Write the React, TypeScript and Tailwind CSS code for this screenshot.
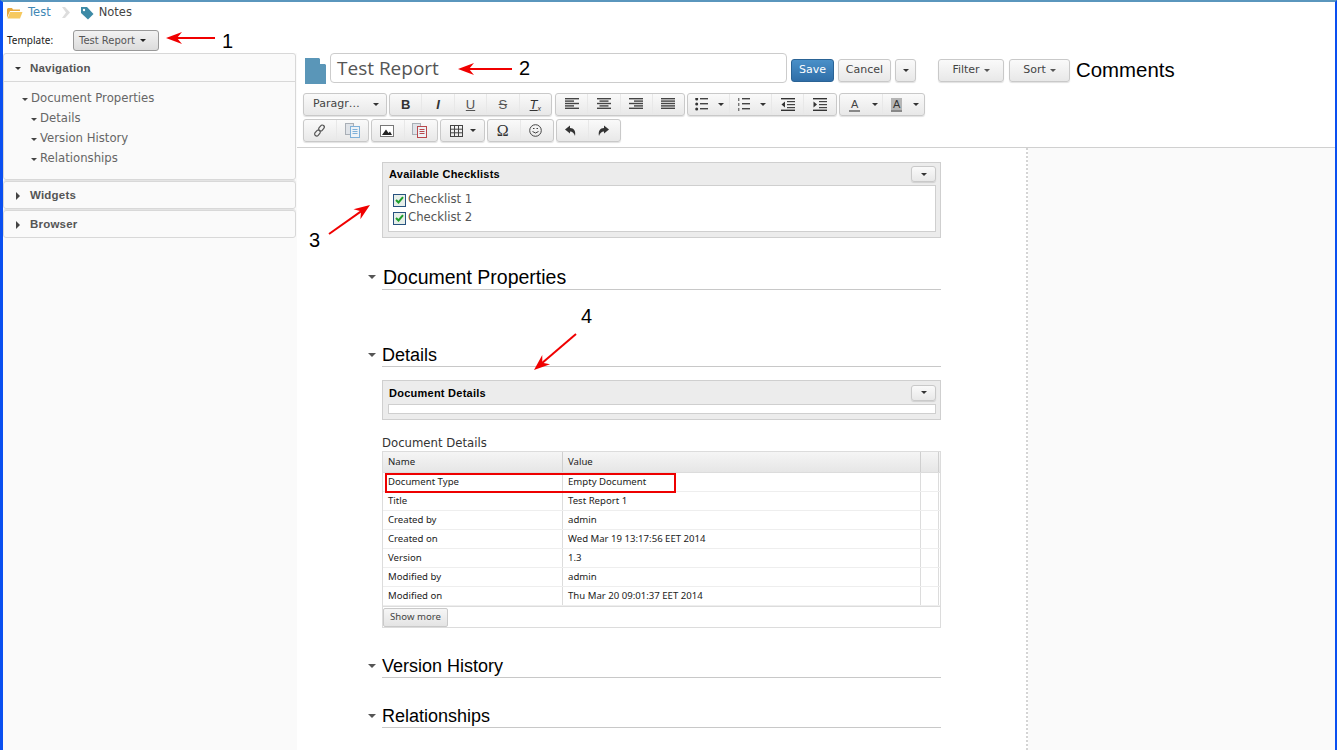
import type { ReactNode } from "react";

const btn = "bg-gradient-to-b from-[#fafafa] to-[#e8e8e8] border border-[#c9c9c9] rounded-[3px] shadow-[0_1px_1px_rgba(0,0,0,0.12)]";

function Caret({ size = 4, color = "#333" }: { size?: number; color?: string }) {
  return (
    <span
      className="inline-block w-0 h-0 border-x-solid border-t-solid border-x-transparent"
      style={{ borderLeftWidth: size, borderRightWidth: size, borderTopWidth: size, borderTopColor: color }}
    />
  );
}

function CaretRight() {
  return <span className="inline-block w-0 h-0 border-y-[4px] border-l-[4px] border-y-transparent border-l-[#444]" />;
}

// toolbar icons
function Lines({ rows }: { rows: [number, number][] }) {
  return (
    <svg width="14" height="13" viewBox="0 0 14 13">
      {rows.map(([x, w], i) => (
        <rect key={i} x={x} y={i * 2.4} width={w} height="1.4" fill="#444" />
      ))}
    </svg>
  );
}

function ListIcon({ numbered }: { numbered?: boolean }) {
  return (
    <svg width="14" height="13" viewBox="0 0 14 13">
      {[1, 6, 11].map((y) => (
        <g key={y}>
          {numbered ? <rect x="1" y={y - 1} width="1.4" height="3" fill="#777" /> : <circle cx="1.7" cy={y} r="1.5" fill="#333" />}
          <rect x="5" y={y - 1} width="8" height="1.4" fill="#444" />
        </g>
      ))}
    </svg>
  );
}

function IndentIcon({ out }: { out?: boolean }) {
  return (
    <svg width="14" height="13" viewBox="0 0 14 13">
      <rect x="0" y="0" width="14" height="1.4" fill="#333" />
      <rect x="6" y="3" width="8" height="1.2" fill="#444" />
      <rect x="6" y="6" width="8" height="1.2" fill="#444" />
      <rect x="6" y="9" width="8" height="1.2" fill="#444" />
      <rect x="0" y="11.6" width="14" height="1.4" fill="#333" />
      <polygon points={out ? "4,3.5 4,9.5 0.5,6.5" : "0.5,3.5 0.5,9.5 4,6.5"} fill="#333" />
    </svg>
  );
}

function DocsIcon({ tint }: { tint: string }) {
  return (
    <svg width="15" height="15" viewBox="0 0 15 15">
      <rect x="0.5" y="0.5" width="8" height="11" fill="#dfe3e8" stroke="#a9afb6" />
      <rect x="5.5" y="3.5" width="9" height="11" fill="#eef2f6" stroke={tint} />
      <rect x="7.5" y="6" width="5" height="1" fill={tint} />
      <rect x="7.5" y="8" width="5" height="1" fill={tint} />
      <rect x="7.5" y="10" width="5" height="1" fill={tint} />
    </svg>
  );
}

function TbGroup({ children, w }: { children: ReactNode; w: string }) {
  return <div className={`${btn} ${w} h-[23px] flex items-stretch shrink-0`}>{children}</div>;
}

function TbCell({ children, last, className = "" }: { children: ReactNode; last?: boolean; className?: string }) {
  return (
    <div className={`flex-1 flex items-center justify-center text-[#333] ${last ? "" : "border-r border-[#e8e8e8]"} ${className}`}>
      {children}
    </div>
  );
}

function Glyph({ children, className = "" }: { children: ReactNode; className?: string }) {
  return <span className={`text-[13px] leading-none text-[#333] font-['Liberation_Sans',sans-serif] ${className}`}>{children}</span>;
}

function Panel({ title, head = "h-[22px]", titleClass = "", children }: { title: string; head?: string; titleClass?: string; children: ReactNode }) {
  return (
    <div className="bg-[#ececec] border border-[#cfcfcf] pl-[5px] pr-[4px] pb-[5px]">
      <div className={`${head} flex items-center justify-between pl-[1px]`}>
        <span className={`font-['Liberation_Sans',sans-serif] text-[11px] font-bold tracking-[0.25px] text-black ${titleClass}`}>{title}</span>
        <div className={`${btn} w-[25px] h-[16px] flex items-center justify-center`}>
          <Caret size={3} />
        </div>
      </div>
      <div className="bg-white border border-[#cfcfcf]">{children}</div>
    </div>
  );
}

function SectionHead({ title, className = "", size = "text-[18px]" }: { title: string; className?: string; size?: string }) {
  return (
    <div className={`relative border-b border-[#c8c8c8] ${className}`}>
      <span className="absolute left-[-14px] top-[9px] flex leading-none">
        <Caret size={4} color="#555" />
      </span>
      <h2 className={`font-['Liberation_Sans',sans-serif] text-black ${size} leading-[22px]`}>{title}</h2>
    </div>
  );
}

function CheckRow({ label }: { label: string }) {
  return (
    <div className="flex items-center gap-[2px] h-[18px]">
      <span className="w-[13px] h-[13px] border border-[#27527f] bg-[#e6eee9] flex items-center justify-center">
        <svg width="9" height="8" viewBox="0 0 9 8">
          <path d="M1 4 L3.5 6.5 L8 1.2" fill="none" stroke="#1e9e2c" strokeWidth="2" />
        </svg>
      </span>
      <span className="font-['DejaVu_Sans',sans-serif] text-[11.7px] text-[#555]">{label}</span>
    </div>
  );
}

function NavItem({ label, className = "" }: { label: string; className?: string }) {
  return (
    <div className={`flex items-center gap-[3px] h-[20px] ${className}`}>
      <Caret size={3} color="#444" />
      <span>{label}</span>
    </div>
  );
}

function Arrow({ x1, y1, x2, y2, left, top, w, h }: { x1: number; y1: number; x2: number; y2: number; left: string; top: string; w: number; h: number }) {
  const angle = Math.atan2(y2 - y1, x2 - x1);
  const pt = (len: number, off: number) => {
    const x = x2 - len * Math.cos(angle) - off * Math.sin(angle);
    const y = y2 - len * Math.sin(angle) + off * Math.cos(angle);
    return `${x},${y}`;
  };
  return (
    <svg className={`absolute ${left} ${top}`} width={w} height={h}>
      <line x1={x1} y1={y1} x2={x2 - 8 * Math.cos(angle)} y2={y2 - 8 * Math.sin(angle)} stroke="#f00000" strokeWidth="2" />
      <polygon points={`${x2},${y2} ${pt(16, 6)} ${pt(11, 0)} ${pt(16, -6)}`} fill="#f00000" />
    </svg>
  );
}

const rows = [
  ["Document Type", "Empty Document"],
  ["Title", "Test Report 1"],
  ["Created by", "admin"],
  ["Created on", "Wed Mar 19 13:17:56 EET 2014"],
  ["Version", "1.3"],
  ["Modified by", "admin"],
  ["Modified on", "Thu Mar 20 09:01:37 EET 2014"],
];

export default function App() {
  return (
    <div className="relative w-[1337px] h-[750px] overflow-hidden bg-white border-l-[3px] border-r-[2px] border-l-[#0a4ff0] border-r-[#0a4ff0] border-t-2 border-t-[#5a96bd] flex flex-col font-['Liberation_Sans',sans-serif]">
      {/* breadcrumb */}
      <div className="h-[20px] pt-[1px] flex items-center pl-[4px] text-[12px] shrink-0">
        <svg width="16" height="12" viewBox="0 0 16 12">
          <path d="M0 2 L1 1 L5 1 L6 2.5 L13 2.5 L13 4 L3 4 L0 11 Z" fill="#e8a93c" />
          <path d="M3 5 L15.5 5 L13 11.5 L0.5 11.5 Z" fill="#f6c95f" />
        </svg>
        <span className="ml-[5px] text-[#3f87b5] font-['DejaVu_Sans',sans-serif] text-[11.5px]">Test</span>
        <svg className="ml-[11px]" width="8" height="11" viewBox="0 0 8 11">
          <path d="M0 0 L3 0 L8 5.5 L3 11 L0 11 L4 5.5 Z" fill="#ddd" />
        </svg>
        <svg className="ml-[10px]" width="14" height="14" viewBox="0 0 14 14">
          <path d="M1 1 L7 1 L13.5 8 L8 13.5 L1 7 Z" fill="#3d8aa6" />
          <circle cx="4" cy="4" r="1.2" fill="#fff" />
        </svg>
        <span className="ml-[5px] text-[#444] font-['DejaVu_Sans',sans-serif] text-[11.5px]">Notes</span>
      </div>

      {/* template row */}
      <div className="h-[31px] flex items-center pl-[4px] pt-[6px] shrink-0">
        <span className="font-['Noto_Sans',sans-serif] text-[10px] text-[#222] w-[66px]">Template:</span>
        <div className="w-[86px] h-[21px] rounded-[3px] border border-[#999] bg-gradient-to-b from-[#f2f2f2] to-[#dcdcdc] flex items-center pl-[5px] gap-[5px]">
          <span className="font-['DejaVu_Sans',sans-serif] text-[10px] text-[#555]">Test Report</span>
          <Caret size={3} color="#222" />
        </div>
      </div>

      <div className="flex-1 flex min-h-0">
        {/* sidebar */}
        <aside className="w-[294px] shrink-0 bg-[#fafafa] pr-[1px]">
          <div className="h-[127px] border border-[#d8d8d8] rounded-[3px] mb-[1px]">
            <div className="h-[28px] pt-[1px] flex items-center pl-[11px] gap-[9px] border-b border-[#d8d8d8]">
              <Caret size={3} color="#333" />
              <span className="text-[11.5px] pt-[1px] font-bold text-[#555] tracking-[0.2px]">Navigation</span>
            </div>
            <div className="pt-[7px] pl-[18px] font-['DejaVu_Sans',sans-serif] text-[11.7px] text-[#666]">
              <NavItem label="Document Properties" />
              <NavItem label="Details" className="pl-[9px]" />
              <NavItem label="Version History" className="pl-[9px]" />
              <NavItem label="Relationships" className="pl-[9px]" />
            </div>
          </div>
          {["Widgets", "Browser"].map((name) => (
            <div key={name} className="h-[28px] pt-[1px] mb-[1px] border border-[#d8d8d8] rounded-[3px] shadow-[0_-1px_0_#e4e4e4] flex items-center pl-[12px] gap-[10px]">
              <CaretRight />
              <span className="text-[11.5px] pt-[1px] font-bold text-[#555] tracking-[0.2px]">{name}</span>
            </div>
          ))}
        </aside>

        <div className="flex-1 min-w-0 flex flex-col">
          {/* editor header */}
          <div className="h-[95px] shrink-0 border-b border-[#d0d0d0] pl-[6px]">
            <div className="h-[35px] flex items-center">
              <svg className="ml-[2px]" width="21" height="26" viewBox="0 0 21 26">
                <path d="M0 0 L14 0 L21 7 L21 26 L0 26 Z" fill="#5a96b8" />
                <path d="M15 0 L21 6 L15 6 Z" fill="#fff" />
              </svg>
              <div className="ml-[4px] self-start w-[457px] h-[30px] border border-[#ccc] rounded-[4px] flex items-center pl-[6px] font-['Open_Sans',sans-serif] text-[19px] text-[#555]">
                Test Report
              </div>
              <div className="ml-[4px] w-[43px] h-[23px] rounded-[3px] border border-[#2a6395] bg-gradient-to-b from-[#4a90c8] to-[#2f6ea8] flex items-center justify-center font-['DejaVu_Sans',sans-serif] text-[11px] text-white">
                Save
              </div>
              <div className={`ml-[4px] w-[53px] h-[23px] ${btn} flex items-center justify-center font-['DejaVu_Sans',sans-serif] text-[11px] text-[#444]`}>Cancel</div>
              <div className={`ml-[4px] w-[21px] h-[23px] ${btn} flex items-center justify-center`}>
                <Caret size={3} />
              </div>
              <div className={`ml-[22px] w-[66px] h-[23px] ${btn} flex items-center justify-center gap-[4px] font-['DejaVu_Sans',sans-serif] text-[11px] text-[#444]`}>
                Filter <Caret size={3} color="#555" />
              </div>
              <div className={`ml-[5px] w-[61px] h-[23px] ${btn} flex items-center justify-center gap-[4px] font-['DejaVu_Sans',sans-serif] text-[11px] text-[#444]`}>
                Sort <Caret size={3} color="#555" />
              </div>
              <span className="ml-[6px] text-[20.4px] text-black">Comments</span>
            </div>

            <div className="mt-[5px] flex gap-[2px]">
              <TbGroup w="w-[84px]">
                <div className="flex-1 flex items-center pl-[9px] pr-[7px] justify-between font-['DejaVu_Sans',sans-serif] text-[11px] text-[#444]">
                  Paragr… <Caret size={3} />
                </div>
              </TbGroup>
              <TbGroup w="w-[163px]">
                <TbCell><Glyph className="font-bold">B</Glyph></TbCell>
                <TbCell><Glyph className="italic font-bold">I</Glyph></TbCell>
                <TbCell><Glyph className="underline text-[#555]">U</Glyph></TbCell>
                <TbCell><Glyph className="line-through text-[#555]">S</Glyph></TbCell>
                <TbCell last><Glyph className="italic underline">T<sub className="text-[7px]">x</sub></Glyph></TbCell>
              </TbGroup>
              <TbGroup w="w-[130px] ml-[1px]">
                <TbCell><Lines rows={[[0, 14], [0, 9], [0, 14], [0, 9], [0, 14]]} /></TbCell>
                <TbCell><Lines rows={[[0, 14], [2.5, 9], [0, 14], [2.5, 9], [0, 14]]} /></TbCell>
                <TbCell><Lines rows={[[0, 14], [5, 9], [0, 14], [5, 9], [0, 14]]} /></TbCell>
                <TbCell last><Lines rows={[[0, 14], [0, 14], [0, 14], [0, 14], [0, 14]]} /></TbCell>
              </TbGroup>
              <TbGroup w="w-[150px]">
                <TbCell className="gap-[9px] pl-[1px]"><ListIcon /><Caret size={3} /></TbCell>
                <TbCell className="gap-[9px] pl-[1px]"><ListIcon numbered /><Caret size={3} /></TbCell>
                <TbCell className="max-w-[32px]"><IndentIcon out /></TbCell>
                <TbCell last className="max-w-[32px]"><IndentIcon /></TbCell>
              </TbGroup>
              <TbGroup w="w-[86px]">
                <TbCell className="!justify-start pl-[9px] gap-[12px]">
                  <span className="text-[11px] leading-[12px] text-[#444] border-b-2 border-[#888] px-[2px]">A</span>
                  <Caret size={3} />
                </TbCell>
                <TbCell last className="!justify-start pl-[8px] gap-[11px]">
                  <span className="text-[11px] leading-[12px] text-[#333] bg-[#b5b5b5] border-b-2 border-[#888] px-[2px]">A</span>
                  <Caret size={3} />
                </TbCell>
              </TbGroup>
            </div>

            <div className="mt-[3px] flex gap-[2px]">
              <TbGroup w="w-[66px]">
                <TbCell>
                  <svg width="13" height="13" viewBox="0 0 13 13" fill="none" stroke="#555" strokeWidth="1.2">
                    <rect x="6.5" y="0.8" width="4" height="6.5" rx="2" transform="rotate(40 8.5 4)" />
                    <rect x="2.5" y="5.8" width="4" height="6.5" rx="2" transform="rotate(40 4.5 9)" />
                  </svg>
                </TbCell>
                <TbCell last><DocsIcon tint="#7fb0d8" /></TbCell>
              </TbGroup>
              <TbGroup w="w-[67px]">
                <TbCell className="pr-[2px]">
                  <svg width="14" height="12" viewBox="0 0 14 12">
                    <rect x="0.5" y="0.5" width="13" height="11" fill="#fff" stroke="#777" />
                    <path d="M2 10 L6 4.5 L8.5 8 L10 6.5 L12 10 Z" fill="#222" />
                  </svg>
                </TbCell>
                <TbCell last className="pr-[3px]"><DocsIcon tint="#b9484c" /></TbCell>
              </TbGroup>
              <TbGroup w="w-[45px]">
                <TbCell last className="gap-[7px]">
                  <svg width="13" height="12" viewBox="0 0 13 12" fill="none" stroke="#444">
                    <rect x="0.5" y="0.5" width="12" height="11" />
                    <path d="M0.5 4.2 H12.5 M0.5 7.8 H12.5 M4.5 0.5 V11.5 M8.5 0.5 V11.5" />
                  </svg>
                  <Caret size={3} />
                </TbCell>
              </TbGroup>
              <TbGroup w="w-[67px]">
                <TbCell className="pr-[2px]"><span className="font-['Liberation_Serif',serif] text-[16px] leading-none text-[#333]">Ω</span></TbCell>
                <TbCell last className="pr-[3px]">
                  <svg width="13" height="13" viewBox="0 0 13 13" fill="none" stroke="#444">
                    <circle cx="6.5" cy="6.5" r="5.8" />
                    <path d="M3.5 7.5 Q6.5 10.5 9.5 7.5" />
                    <path d="M4 4.5 H5.5 M7.5 4.5 H9" />
                  </svg>
                </TbCell>
              </TbGroup>
              <TbGroup w="w-[65px]">
                <TbCell className="pr-[2px]">
                  <svg width="12" height="12" viewBox="0 0 12 12">
                    <path d="M0 4.5 L5 0.5 L5 3 C9 3 11 6 10 11 C9 8 7.5 6.5 5 6.5 L5 8.5 Z" fill="#333" />
                  </svg>
                </TbCell>
                <TbCell last className="pr-[3px]">
                  <svg width="12" height="12" viewBox="0 0 12 12">
                    <path d="M12 4.5 L7 0.5 L7 3 C3 3 1 6 2 11 C3 8 4.5 6.5 7 6.5 L7 8.5 Z" fill="#333" />
                  </svg>
                </TbCell>
              </TbGroup>
            </div>
          </div>

          <div className="flex-1 flex min-h-0">
            {/* document column */}
            <main className="w-[731px] shrink-0 border-r-2 border-dotted border-[#d4d4d4] pl-[85px] pr-[85px] pt-[14px]">
              <Panel title="Available Checklists">
                <div className="pl-[4px] pt-[5px] h-[45px]">
                  <CheckRow label="Checklist 1" />
                  <CheckRow label="Checklist 2" />
                </div>
              </Panel>

              <SectionHead title="Document Properties" size="text-[19.5px] pl-[1px]" className="mt-[28px] pb-[1px]" />
              <SectionHead title="Details" className="mt-[54px]" />

              <div className="mt-[13px]">
                <Panel title="Document Details" head="h-[23px]" titleClass="pt-[2px]">
                  <div className="h-[8px]" />
                </Panel>
              </div>

              <div className="mt-[15px] font-['DejaVu_Sans',sans-serif] text-[11.7px] text-[#333] leading-[16px]">Document Details</div>

              <div className="relative border border-[#dcdcdc] font-['Noto_Sans',sans-serif] text-[9.6px] text-[#222]">
                <div className="flex h-[21px] bg-gradient-to-b from-[#f5f5f5] to-[#e6e6e6] border-b border-[#dcdcdc]">
                  <div className="w-[180px] pl-[5px] flex items-center border-r border-[#cfcfcf]">Name</div>
                  <div className="w-[358px] pl-[5px] flex items-center border-r border-[#cfcfcf]">Value</div>
                  <div className="w-[18px] border-r border-[#cfcfcf]" />
                </div>
                {rows.map(([name, value]) => (
                  <div key={name} className="flex h-[19px] border-b border-[#eeeeee]">
                    <div className="w-[180px] pl-[5px] flex items-center border-r border-[#dcdcdc]">{name}</div>
                    <div className="w-[358px] pl-[5px] flex items-center border-r border-[#dcdcdc]">{value}</div>
                    <div className="w-[18px] border-r border-[#dcdcdc]" />
                  </div>
                ))}
                <div className="h-[21px] border-t border-[#dcdcdc] flex items-center">
                  <div className="w-[65px] h-[19px] rounded-[2px] border border-[#c9c9c9] bg-gradient-to-b from-[#f6f6f6] to-[#e4e4e4] flex items-center justify-center text-[#444]">
                    Show more
                  </div>
                </div>
                <div className="absolute left-[2px] top-[21px] w-[291px] h-[20px] border-2 border-[#ee0000]" />
              </div>

              <SectionHead title="Version History" className="mt-[27px]" />
              <SectionHead title="Relationships" className="mt-[27px]" />
            </main>
            <div className="flex-1 bg-[#fafafa]" />
          </div>
        </div>
      </div>

      {/* annotations */}
      <Arrow left="left-[160px]" top="top-[26px]" w={60} h={20} x1={52} y1={10} x2={3} y2={10} />
      <span className="absolute left-[219px] top-[27px] text-[20px] leading-[24px] text-black">1</span>
      <Arrow left="left-[452px]" top="top-[58px]" w={60} h={20} x1={57} y1={9} x2={3} y2={9} />
      <span className="absolute left-[516px] top-[54px] text-[20px] leading-[24px] text-black">2</span>
      <Arrow left="left-[322px]" top="top-[200px]" w={50} h={40} x1={4} y1={32} x2={45} y2={3} />
      <span className="absolute left-[306px] top-[226px] text-[20px] leading-[24px] text-black">3</span>
      <span className="absolute left-[578px] top-[302px] text-[20px] leading-[24px] text-black">4</span>
      <Arrow left="left-[528px]" top="top-[329px]" w={50} h={44} x1={45} y1={3} x2={3} y2={39} />
    </div>
  );
}
